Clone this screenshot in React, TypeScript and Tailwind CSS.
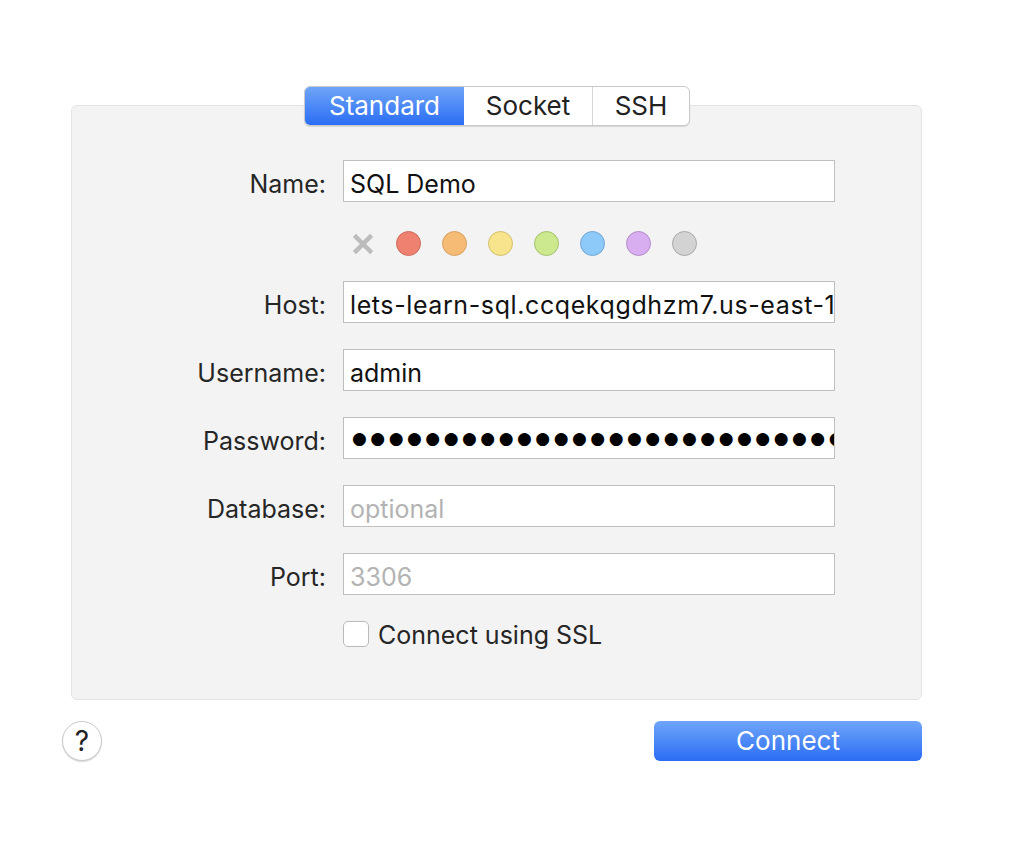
import React from "react";

const colors = [
  { bg: "bg-[#ee8170]", bd: "border-[#cd6b5c]" },
  { bg: "bg-[#f6bb74]", bd: "border-[#d6a060]" },
  { bg: "bg-[#f8e48c]", bd: "border-[#d2bf6c]" },
  { bg: "bg-[#cce98e]", bd: "border-[#a3c26d]" },
  { bg: "bg-[#8dc9f9]", bd: "border-[#6da6d4]" },
  { bg: "bg-[#d9aef1]", bd: "border-[#b28cc8]" },
  { bg: "bg-[#d3d3d3]", bd: "border-[#a8a8a8]" },
];

function Row({ label, children }: { label: string; children: React.ReactNode }) {
  return (
    <div className="flex items-center h-[42px]">
      <div className="w-[255px] text-right text-[25px] leading-none pt-[6px] text-[#262626] pr-[1px]">{label}</div>
      <div className="ml-[16px] w-[492px] h-[42px]">{children}</div>
    </div>
  );
}

function Field({ value, placeholder, tight }: { value?: string; placeholder?: string; tight?: boolean }) {
  return (
    <div className="h-full w-full bg-white border border-[#bfbfbf] flex items-center pl-[6px] pt-[6px] overflow-hidden whitespace-nowrap text-[25px] leading-none">
      {value ? (
        <span className={`text-[#111] ${tight ? "tracking-[0.6px]" : ""}`}>{value}</span>
      ) : (
        <span className="text-[#b3b3b3]">{placeholder}</span>
      )}
    </div>
  );
}

export default function App() {
  return (
    <div
      className="w-[1026px] h-[866px] bg-white relative"
      style={{ fontFamily: "Inter, 'Noto Sans', sans-serif" }}
    >
      <div className="pt-[86px] pl-[71px]">
        <div className="relative z-10 ml-[233px] flex w-[386px] h-[40px] rounded-[6px] border border-[#c9c9c9] bg-white shadow-[0_1px_1px_rgba(0,0,0,0.12)] overflow-hidden text-[26px] leading-none">
          <div className="w-[159px] flex items-center justify-center text-white bg-gradient-to-b from-[#6fa4f8] to-[#2a6cf4]">
            Standard
          </div>
          <div className="w-[129px] flex items-center justify-center text-[#222] border-r border-[#d6d6d6]">
            Socket
          </div>
          <div className="flex-1 flex items-center justify-center text-[#222]">SSH</div>
        </div>
        <div className="-mt-[21px] w-[851px] h-[595px] bg-[#f3f3f3] border border-[#e3e3e3] rounded-[6px] pt-[54px]">
          <Row label="Name:">
            <Field value="SQL Demo" />
          </Row>
          <div className="flex items-center h-[25px] mt-[29px] ml-[271px]">
            <svg width="22" height="22" viewBox="0 0 22 22" className="ml-[9px]">
              <path d="M4 4 L18 18 M18 4 L4 18" stroke="#bcbcbc" strokeWidth="4.5" strokeLinecap="square" />
            </svg>
            {colors.map((c, i) => (
              <div
                key={i}
                className={`${c.bg} ${c.bd} border-[1.5px] w-[25px] h-[25px] rounded-full ${i === 0 ? "ml-[22px]" : "ml-[21px]"}`}
              />
            ))}
          </div>
          <div className="mt-[25px] flex flex-col gap-[26px]">
            <Row label="Host:">
              <Field value="lets-learn-sql.ccqekqgdhzm7.us-east-1.rds.amazonaws.com" tight />
            </Row>
            <Row label="Username:">
              <Field value="admin" />
            </Row>
            <Row label="Password:">
              <div className="h-full w-full bg-white border border-[#bfbfbf] flex items-center pl-[8px] pt-[2px] overflow-hidden whitespace-nowrap">
                <span
                  className="text-[17px] text-black tracking-[3.5px]"
                  style={{ fontFamily: "'DejaVu Sans', sans-serif" }}
                >
                  {"●".repeat(40)}
                </span>
              </div>
            </Row>
            <Row label="Database:">
              <Field placeholder="optional" />
            </Row>
            <Row label="Port:">
              <Field placeholder="3306" />
            </Row>
          </div>
          <div className="mt-[26px] ml-[271px] flex items-center h-[26px]">
            <div className="w-[26px] h-[26px] rounded-[5px] border border-[#b9b9b9] bg-white" />
            <span className="ml-[9px] text-[25px] leading-none pt-[2px] text-[#262626]">Connect using SSL</span>
          </div>
        </div>
        <div className="flex items-center mt-[21px] w-[851px] h-[40px]">
          <div className="-ml-[9px] w-[40px] h-[40px] rounded-full bg-white border border-[#cacaca] shadow-[0_1px_1px_rgba(0,0,0,0.15)] flex items-center justify-center text-[28px] leading-none text-[#222]">
            ?
          </div>
          <div className="ml-auto w-[268px] h-[40px] rounded-[6px] bg-gradient-to-b from-[#6fa4f8] to-[#2a6cf4] text-white text-[26px] leading-none flex items-center justify-center">
            Connect
          </div>
        </div>
      </div>
    </div>
  );
}
